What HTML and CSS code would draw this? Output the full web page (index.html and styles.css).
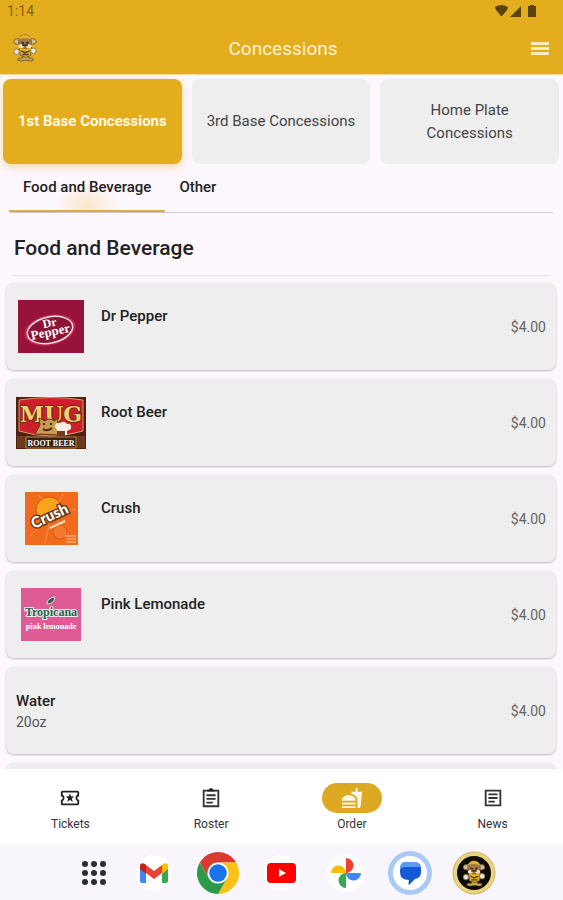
FILE: index.html
```html
<!DOCTYPE html>
<html lang="en">
<head>
  <meta charset="UTF-8">
  <meta name="viewport" content="width=device-width, initial-scale=1.0">
  <title>Concessions</title>
  <link rel="stylesheet" href="styles.css">
</head>
<body>
  <svg class="defs" aria-hidden="true">
    <symbol id="mascot" viewBox="0 0 26 30">
      <path d="M5 28q0-3 5-2l2-4h3l2 4q5-1 5 2-2 2-8 0-6 2-9 0z" fill="#c9ab45" stroke="#6d5a34" stroke-width="1"/>
      <path d="M7 14h13l-1 9-5 2-6-2z" fill="#efb516" stroke="#6d5a34" stroke-width="1"/>
      <path d="M9 18l4 2 5-2M10 22h7" fill="none" stroke="#4a3c24" stroke-width="1.5"/>
      <ellipse cx="5" cy="8" rx="4" ry="3" fill="#d6bf94" stroke="#7a5f3a"/>
      <ellipse cx="21" cy="8" rx="4" ry="3" fill="#d6bf94" stroke="#7a5f3a"/>
      <path d="M6 8q1-7 7-7t7 7l-1 5q-6 5-12 0z" fill="#a07a48" stroke="#7a5f3a"/>
      <path d="M6 6q2-5 7-5t7 5q-7-3-14 0z" fill="#e5b329"/>
      <ellipse cx="9" cy="13" rx="3" ry="2" fill="#f5e7c2"/>
      <ellipse cx="17" cy="13" rx="3" ry="2" fill="#f5e7c2"/>
      <path d="M9 9l3 1M17 9l-3 1M10 12h6" stroke="#4a2f22" stroke-width="2"/>
      <ellipse cx="4" cy="19" rx="3" ry="3" fill="#e7e4da" stroke="#8a7a5a"/>
      <ellipse cx="22" cy="18" rx="3" ry="3" fill="#e7e4da" stroke="#8a7a5a"/>
    </symbol>
  </svg>

  <div class="app">
    <header class="top">
      <div class="status">
        <span>1:14</span>
        <svg class="status-icons" viewBox="0 0 44 14" aria-hidden="true">
          <path d="M1 3q6-4 13 0l-1 3-5 6h-1L2 6zM27 2v11H16zM36 1h4v1h2v11h-8V2h2z"/>
        </svg>
      </div>
      <div class="appbar">
        <svg class="team-logo" role="img" aria-label="Team mascot"><use href="#mascot"/></svg>
        <h1>Concessions</h1>
        <button class="menu-btn" type="button" aria-label="Menu"><span></span><span></span><span></span></button>
      </div>
    </header>

    <main>
      <div class="stands">
        <button class="stand active" type="button">1st Base Concessions</button>
        <button class="stand" type="button">3rd Base Concessions</button>
        <button class="stand" type="button">Home Plate Concessions</button>
      </div>

      <div class="categories">
        <button class="category active" type="button">Food and Beverage</button>
        <button class="category" type="button">Other</button>
      </div>

      <h2>Food and Beverage</h2>

      <ul class="items">
        <li class="item">
          <div class="thumb">
            <svg width="66" height="53" viewBox="0 0 66 53" role="img" aria-label="Dr Pepper logo">
              <rect width="66" height="53" fill="#98133b"/>
              <g transform="rotate(-12 32 30)">
                <ellipse cx="32" cy="30" rx="26" ry="15" fill="#c42a51"/>
                <ellipse cx="32" cy="30" rx="23" ry="13" fill="#8d1236" stroke="#f2dfe5" stroke-width="1.5"/>
                <text class="pepper" x="26" y="27" font-size="12">Dr</text>
                <text class="pepper" x="32" y="36" font-size="13" text-anchor="middle">Pepper</text>
              </g>
            </svg>
          </div>
          <h3>Dr Pepper</h3>
          <span class="price">$4.00</span>
        </li>
        <li class="item">
          <div class="thumb">
            <svg width="70" height="52" viewBox="0 0 70 52" role="img" aria-label="Mug Root Beer logo">
              <rect width="70" height="52" fill="#4e2014"/>
              <path d="M3 3q32-5 64 0v31q-32 10-64 0z" fill="#ce1e2b" stroke="#d99b62"/>
              <path d="M1 39h12v12H1zM57 39h12v12H57z" fill="#6b3a19"/>
              <text class="mug" x="35" y="25" font-size="22" text-anchor="middle">MUG</text>
              <path d="M19 37l5-9-1-7 6 3q5-4 9 0l4-3-1 11 3 6z" fill="#c99b50" stroke="#5c351c"/>
              <path d="M27 27h2M34 27h2M27 32q4 3 9-1" fill="none" stroke="#4b2715" stroke-width="2"/>
              <path d="M39 30q0-5 5-4 4-3 7 1 5-1 4 5l-4 2v4H41v-5z" fill="#f7ede2"/>
              <path d="M41 34h8v5h-8z" fill="#703c22"/>
              <path d="M10 40h50v11H10z" fill="#3b2117" stroke="#b6893e"/>
              <text class="banner" x="35" y="49" font-size="8" text-anchor="middle">ROOT BEER</text>
            </svg>
          </div>
          <h3>Root Beer</h3>
          <span class="price">$4.00</span>
        </li>
        <li class="item">
          <div class="thumb">
            <svg width="53" height="53" viewBox="0 0 53 53" role="img" aria-label="Crush logo">
              <rect width="53" height="53" fill="#f26a1b"/>
              <path d="M27 22L14 3M27 22L38 2M27 22L51 17M27 22L5 44M27 22L20 51M27 22L44 43" stroke="#f99250" stroke-width="1"/>
              <circle cx="24" cy="18" r="13" fill="#f8a51c" stroke="#d85615"/>
              <circle cx="35" cy="40" r="7" fill="#f47a2e" stroke="#e2571b"/>
              <g transform="rotate(-25 25 25)">
                <text class="crush" x="25" y="29" font-size="15" text-anchor="middle">Crush</text>
                <path d="M20 35h17" stroke="#ffe1bd" stroke-width="2"/>
              </g>
              <path d="M40 44h11M42 47h9M41 50h10" stroke="#ffc493" stroke-width="1"/>
            </svg>
          </div>
          <h3>Crush</h3>
          <span class="price">$4.00</span>
        </li>
        <li class="item">
          <div class="thumb">
            <svg width="60" height="53" viewBox="0 0 60 53" role="img" aria-label="Tropicana Pink Lemonade logo">
              <rect width="60" height="53" fill="#df5b96"/>
              <text class="tropicana" x="30" y="28" font-size="12" text-anchor="middle">Tropicana</text>
              <path d="M26 16q0-6 8-7-1 7-8 7z" fill="#176b42" stroke="#f5d5e2"/>
              <text class="banner" x="30" y="41" font-size="8" text-anchor="middle">pink lemonade</text>
            </svg>
          </div>
          <h3>Pink Lemonade</h3>
          <span class="price">$4.00</span>
        </li>
        <li class="item no-thumb">
          <div>
            <h3>Water</h3>
            <p>20oz</p>
          </div>
          <span class="price">$4.00</span>
        </li>
        <li class="item"></li>
      </ul>
    </main>

    <nav class="bottom-nav">
      <a href="#tickets">
        <span class="nav-icon">
          <svg viewBox="0 0 24 24" aria-hidden="true"><path d="M22 10V6c0-1.11-.9-2-2-2H4c-1.1 0-1.99.89-1.99 2v4c1.1 0 1.99.9 1.99 2s-.89 2-2 2v4c0 1.1.9 2 2 2h16c1.1 0 2-.9 2-2v-4c-1.1 0-2-.9-2-2s.9-2 2-2zm-2-1.46c-1.19.69-2 1.99-2 3.46s.81 2.77 2 3.46V18H4v-2.54c1.19-.69 2-1.99 2-3.46 0-1.48-.8-2.77-1.99-3.46L4 6h16v2.54zM9.07 16L12 14.12 14.93 16l-.89-3.36 2.69-2.2-3.47-.21L12 7l-1.27 3.22-3.47.21 2.69 2.2z"/></svg>
        </span>
        Tickets
      </a>
      <a href="#roster">
        <span class="nav-icon">
          <svg viewBox="0 0 24 24" aria-hidden="true"><path d="M4 4h16v17H4zM7 9h10M7 13h10M7 17h7" fill="none" stroke="currentColor" stroke-width="2"/><path d="M8 3h2a2 2 0 0 1 4 0h2v2H8z"/></svg>
        </span>
        Roster
      </a>
      <a class="active" href="#order">
        <span class="nav-icon">
          <svg viewBox="0 0 24 24" aria-hidden="true"><path d="M18.06 22.99h1.66c.84 0 1.53-.64 1.63-1.46L23 5.05h-5V1h-1.97v4.05h-4.97l.3 2.34c1.71.47 3.31 1.32 4.27 2.26 1.44 1.42 2.43 2.89 2.43 5.29v8.05zM1 21.99V21h15.03v.99c0 .55-.45 1-1.01 1H2.01c-.56 0-1.01-.45-1.01-1zm15.03-7c0-8-15.03-8-15.03 0h15.03zM1.02 17h15v2h-15z"/></svg>
        </span>
        Order
      </a>
      <a href="#news">
        <span class="nav-icon">
          <svg viewBox="0 0 24 24" aria-hidden="true"><path d="M4 4h16v16H4zM7 8h10M7 12h10M7 16h7" fill="none" stroke="currentColor" stroke-width="2"/></svg>
        </span>
        News
      </a>
    </nav>

    <div class="taskbar">
      <button class="all-apps" type="button" aria-label="All apps">
        <svg width="26" height="26" viewBox="0 0 26 26" fill="#2c2c34">
          <circle cx="4" cy="4" r="3"/><circle cx="13" cy="4" r="3"/><circle cx="22" cy="4" r="3"/>
          <circle cx="4" cy="13" r="3"/><circle cx="13" cy="13" r="3"/><circle cx="22" cy="13" r="3"/>
          <circle cx="4" cy="22" r="3"/><circle cx="13" cy="22" r="3"/><circle cx="22" cy="22" r="3"/>
        </svg>
      </button>
      <button type="button" aria-label="Gmail">
        <svg width="42" height="42" viewBox="0 0 42 42">
          <circle cx="21" cy="21" r="18" fill="#fff"/>
          <path d="M7 14l6 5v12H9q-2 0-2-2z" fill="#4285f4"/>
          <path d="M35 14l-6 5v12h4q2 0 2-2z" fill="#34a853"/>
          <path d="M29 13l1-1q5-2 5 2v3l-6 5z" fill="#fbbc04"/>
          <path d="M13 13l8 6 8-6v8l-8 6-8-6z" fill="#ea4335"/>
          <path d="M7 17v-3q0-4 5-2l1 1v9z" fill="#c5221f"/>
        </svg>
      </button>
      <button type="button" aria-label="Chrome">
        <svg width="42" height="42" viewBox="0 0 48 48">
          <circle cx="24" cy="24" r="13" fill="#fff"/>
          <path d="M24 12h20.78A24 24 0 0 0 3.22 12L13.6 30A12 12 0 0 1 24 12z" fill="#d93b2f"/>
          <path d="M24 12h20.78A24 24 0 0 1 24 48l10.4-18A12 12 0 0 0 24 12z" fill="#fbc116"/>
          <path d="M3.22 12L13.6 30a12 12 0 0 0 20.8 0L24 48A24 24 0 0 1 3.22 12z" fill="#2b9a49"/>
          <circle cx="24" cy="24" r="10" fill="#1a73e8"/>
        </svg>
      </button>
      <button type="button" aria-label="YouTube">
        <svg width="42" height="42" viewBox="0 0 42 42">
          <circle cx="21" cy="21" r="18" fill="#fff"/>
          <rect x="6" y="11" width="29" height="20" rx="4" fill="#f00"/>
          <path d="M18 17v8l7-4z" fill="#fff"/>
        </svg>
      </button>
      <button type="button" aria-label="Photos">
        <svg width="42" height="42" viewBox="0 0 42 42">
          <circle cx="21" cy="21" r="19" fill="#fff"/>
          <path d="M21 6a7 7 0 0 1 0 15z" fill="#ea4335"/>
          <path d="M36 21a7 7 0 0 1-15 0z" fill="#4285f4"/>
          <path d="M21 36a7 7 0 0 1 0-15z" fill="#34a853"/>
          <path d="M6 21a7 7 0 0 1 15 0z" fill="#fbbc04"/>
        </svg>
      </button>
      <button type="button" aria-label="Messages">
        <svg width="44" height="44" viewBox="0 0 44 44">
          <circle cx="22" cy="22" r="22" fill="#a9caf3"/>
          <circle cx="22" cy="22" r="17" fill="#fff"/>
          <path d="M17 11h9q7 0 7 7v3q0 6-6 7l-6 6q-1-1 0-5-9 0-9-8v-3z" fill="#1558d6"/>
          <path d="M17 11h9q5 0 6 5H18q-6 0-6 4-1-9 5-9z" fill="#5b9bf0"/>
        </svg>
      </button>
      <button type="button" aria-label="Team app">
        <svg width="44" height="44" viewBox="0 0 44 44">
          <circle cx="22" cy="22" r="21" fill="#ead37a" stroke="#c9b66f"/>
          <circle cx="22" cy="22" r="17" fill="#0c0b09"/>
          <use href="#mascot" x="10" y="9" width="24" height="27"/>
        </svg>
      </button>
    </div>
  </div>
</body>
</html>
```

FILE: styles.css
```css
* {
  box-sizing: border-box;
}
body {
  margin: 0;
  font-family: Roboto, "Liberation Sans", sans-serif;
  font-size: 14px;
  color: #222;
  background: #fdf7fe;
}
button {
  border: none;
  padding: 0;
  background: none;
  font: inherit;
  color: inherit;
  cursor: pointer;
}
h1, h2, h3, p, ul {
  margin: 0;
  padding: 0;
}
.defs {
  display: none;
}
.app {
  display: flex;
  flex-direction: column;
  height: 100vh;
}

/* Header */
.top {
  background: #e3ad1d;
  border-bottom: 1px solid #f5d893;
}
.status {
  display: flex;
  justify-content: space-between;
  align-items: center;
  height: 22px;
  padding: 0 25px 0 7px;
  color: #85640d;
}
.status-icons {
  width: 44px;
  height: 14px;
  fill: #584507;
}
.appbar {
  display: grid;
  grid-template-columns: 28px 1fr 28px;
  align-items: center;
  height: 52px;
  padding: 0 9px 0 12px;
}
.team-logo {
  width: 26px;
  height: 28px;
}
.appbar h1 {
  font-size: 19px;
  font-weight: 400;
  text-align: center;
  color: #fff3d2;
}
.menu-btn {
  display: flex;
  flex-direction: column;
  justify-content: center;
  align-items: center;
  gap: 2px;
}
.menu-btn span {
  width: 18px;
  height: 3px;
  background: #faebc6;
}

/* Menu page */
main {
  flex: 1;
  min-height: 0;
  overflow: hidden;
}
.stands {
  display: grid;
  grid-template-columns: repeat(3, 1fr);
  gap: 10px;
  padding: 4px 4px 0 3px;
}
.stand {
  height: 85px;
  padding: 0 12px;
  border-radius: 8px;
  background: #eee;
  font-size: 15px;
  line-height: 23px;
  color: #444;
}
.stand.active {
  background: #e3ad1d;
  color: #fff8e4;
  font-weight: 700;
  box-shadow: 0 3px 8px rgba(227, 173, 29, 0.4);
}
.categories {
  display: flex;
  margin: 0 10px 0 9px;
  border-bottom: 1px solid #cfc8cf;
}
.category {
  height: 48px;
  padding: 0 14px;
  border-bottom: 2px solid transparent;
  font-size: 15px;
  font-weight: 500;
}
.category.active {
  border-bottom-color: #dba94f;
  background: radial-gradient(ellipse 32px 22px at 50% 90%, #fae6cb, transparent);
}
h2 {
  margin: 0 12px 7px;
  padding: 8px 2px 0;
  border-bottom: 1px solid #e7dfe7;
  font-size: 21px;
  font-weight: 500;
  line-height: 54px;
}
.items {
  display: flex;
  flex-direction: column;
  gap: 9px;
  padding: 0 7px 0 6px;
  list-style: none;
}
.item {
  display: grid;
  grid-template-columns: 70px 1fr auto;
  align-items: center;
  column-gap: 15px;
  height: 87px;
  padding: 0 10px;
  border-radius: 8px;
  background: #eee;
  box-shadow: 0 1px 2px rgba(60, 40, 60, 0.3);
}
.item.no-thumb {
  grid-template-columns: 1fr auto;
}
.thumb {
  display: flex;
  justify-content: center;
}
.item h3 {
  font-size: 15px;
  font-weight: 500;
  line-height: 22px;
}
.thumb + h3 {
  align-self: start;
  padding-top: 22px;
}
.item p {
  font-size: 14px;
  line-height: 20px;
  color: #555;
}
.price {
  font-size: 14px;
  color: #666;
}

/* Lettering in the drink logos */
.pepper,
.banner {
  font-family: "Liberation Serif", serif;
  font-weight: 700;
  fill: #fff;
}
.mug {
  font-family: "DejaVu Serif", serif;
  font-weight: 700;
  fill: #f1cf6b;
  stroke: #6d2a16;
  stroke-width: 2;
  paint-order: stroke;
}
.crush {
  font-family: Lato, sans-serif;
  font-weight: 900;
  fill: #fff;
  stroke: #6b3b18;
  stroke-width: 3;
  paint-order: stroke;
}
.tropicana {
  font-family: "Liberation Serif", serif;
  font-weight: 700;
  fill: #176b42;
  stroke: #fbe6ef;
  stroke-width: 2;
  paint-order: stroke;
}

/* Bottom navigation */
.bottom-nav {
  display: grid;
  grid-template-columns: repeat(4, 1fr);
  height: 76px;
  padding-top: 14px;
  background: #fff;
}
.bottom-nav a {
  display: flex;
  flex-direction: column;
  align-items: center;
  gap: 3px;
  font-size: 12px;
  line-height: 16px;
  color: #333;
  text-decoration: none;
}
.nav-icon {
  display: flex;
  align-items: center;
  justify-content: center;
  width: 60px;
  height: 30px;
  border-radius: 15px;
}
.nav-icon svg {
  width: 22px;
  height: 22px;
  fill: #222;
}
.active .nav-icon {
  background: #dda922;
}
.active .nav-icon svg {
  fill: #fff8e6;
}

/* System taskbar */
.taskbar {
  display: flex;
  justify-content: center;
  height: 55px;
  background: #f8f5fd;
}
.taskbar button {
  display: flex;
  align-items: center;
  justify-content: center;
  width: 64px;
}
.taskbar .all-apps {
  padding-left: 8px;
}
```
